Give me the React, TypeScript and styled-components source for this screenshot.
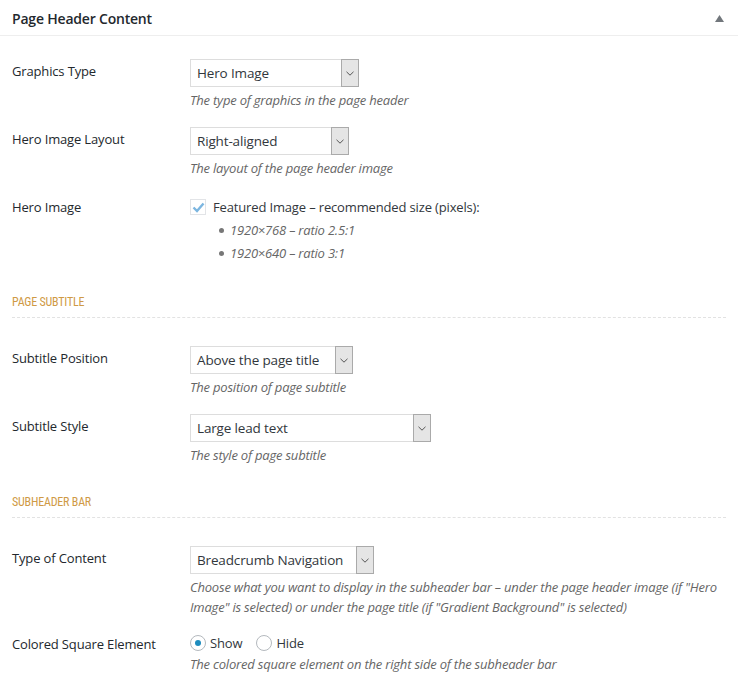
import React from "react";
import styled, { createGlobalStyle } from "styled-components";

const Global = createGlobalStyle`
  html, body { margin: 0; padding: 0; background: #fff; }
  body { font-family: "Open Sans", "Noto Sans", sans-serif; color: #23282d; font-size: 13px; }
`;

const Box = styled.div`
  width: 738px;
  background: #fff;
`;

const Header = styled.div`
  height: 36px;
  border-bottom: 1px solid #eeeeee;
  display: flex;
  align-items: center;
  justify-content: space-between;
  padding: 0 12px 0 12px;
  box-sizing: border-box;
`;

const Title = styled.h2`
  margin: 0;
  font-size: 14px;
  font-weight: 600;
  color: #23282d;
  letter-spacing: -0.2px;
  line-height: 20px;
  padding-top: 2px;
`;

const Toggle = styled.span`
  display: flex;
  width: 14px;
  justify-content: center;
  padding-top: 2px;
`;

const Body = styled.div`
  padding: 23px 12px 24px 12px;
  display: flex;
  flex-direction: column;
`;

const Row = styled.div<{ $gap?: number }>`
  display: grid;
  grid-template-columns: 178px 1fr;
  margin-top: ${(p) => p.$gap ?? 17}px;
  &:first-child { margin-top: 0; }
`;

const Label = styled.div`
  padding-top: 2px;
  line-height: 20px;
  font-size: 13px;
  color: #23282d;
  letter-spacing: -0.15px;
`;

const Field = styled.div`
  display: flex;
  flex-direction: column;
  align-items: flex-start;
`;

const Select = styled.div<{ $w: number }>`
  width: ${(p) => p.$w}px;
  height: 28px;
  box-sizing: border-box;
  border: 1px solid #dddddd;
  display: flex;
  align-items: stretch;
  background: #fff;
`;

const SelectText = styled.span`
  flex: 1;
  padding-left: 6px;
  line-height: 26px;
  font-size: 13.5px;
  color: #32373c;
  letter-spacing: -0.15px;
  white-space: nowrap;
`;

const SelectArrow = styled.span`
  width: 16px;
  border: 1px solid #aaaaaa;
  margin: -1px -1px -1px 0;
  background: #e5e5e5;
  display: flex;
  align-items: center;
  justify-content: center;
`;

const Desc = styled.p<{ $tight?: boolean }>`
  margin: ${(p) => (p.$tight ? 0 : 3)}px 0 0 0;
  font-style: italic;
  font-size: 13px;
  line-height: 20px;
  color: #666666;
  letter-spacing: -0.2px;
  max-width: 536px;
`;

const CheckLine = styled.label`
  display: flex;
  align-items: center;
  height: 24px;
  gap: 7px;
  color: #32373c;
  letter-spacing: -0.15px;
`;

const CheckBox = styled.span`
  width: 16px;
  height: 16px;
  box-sizing: border-box;
  border: 1px solid #e2e4e7;
  display: flex;
  align-items: center;
  justify-content: center;
  background: #fff;
`;

const Bullets = styled.ul`
  margin: 0;
  padding: 0 0 0 29px;
  list-style: none;
`;

const Bullet = styled.li`
  line-height: 23px;
  font-style: italic;
  color: #666666;
  display: flex;
  align-items: center;
  gap: 6px;
  letter-spacing: -0.2px;
  &::before {
    content: "";
    width: 5px;
    height: 5px;
    border-radius: 50%;
    background: #777;
  }
`;

const SectionHead = styled.div<{ $top: number }>`
  margin-top: ${(p) => p.$top}px;
  margin-bottom: 28px;
  border-bottom: 1px dashed #e2e2e2;
  padding-bottom: 6px;
  line-height: 18px;
  font-family: "Liberation Sans Narrow", "Roboto Condensed", "Liberation Sans", sans-serif;
  font-size: 12px;
  color: #cf9a45;
  text-transform: uppercase;
  letter-spacing: -0.2px;
`;

const RadioGroup = styled.div`
  display: flex;
  align-items: center;
  height: 22px;
  gap: 14px;
`;

const RadioLabel = styled.label`
  display: flex;
  align-items: center;
  gap: 4px;
  color: #32373c;
  letter-spacing: -0.15px;
`;

const RadioCircle = styled.span<{ $on?: boolean }>`
  width: 16px;
  height: 16px;
  box-sizing: border-box;
  border-radius: 50%;
  border: 1px solid #b4b9be;
  background: #fff;
  display: flex;
  align-items: center;
  justify-content: center;
  &::after {
    content: "";
    width: 6px;
    height: 6px;
    border-radius: 50%;
    background: ${(p) => (p.$on ? "#1e8cbe" : "transparent")};
  }
`;

const Chevron = () => (
  <svg width="8" height="5" viewBox="0 0 8 5">
    <path d="M0.5 0.8 L4 4.2 L7.5 0.8" fill="none" stroke="#555" strokeWidth="1" />
  </svg>
);

const Dropdown = ({ w, value }: { w: number; value: string }) => (
  <Select $w={w}>
    <SelectText>{value}</SelectText>
    <SelectArrow>
      <Chevron />
    </SelectArrow>
  </Select>
);

export default function App() {
  return (
    <>
      <Global />
      <Box>
        <Header>
          <Title>Page Header Content</Title>
          <Toggle>
            <svg width="9" height="7" viewBox="0 0 9 7">
              <path d="M4.5 0 L9 7 L0 7 Z" fill="#72777c" />
            </svg>
          </Toggle>
        </Header>
        <Body>
          <Row>
            <Label>Graphics Type</Label>
            <Field>
              <Dropdown w={169} value="Hero Image" />
              <Desc>The type of graphics in the page header</Desc>
            </Field>
          </Row>
          <Row>
            <Label>Hero Image Layout</Label>
            <Field>
              <Dropdown w={159} value="Right-aligned" />
              <Desc>The layout of the page header image</Desc>
            </Field>
          </Row>
          <Row>
            <Label>Hero Image</Label>
            <Field>
              <CheckLine>
                <CheckBox>
                  <svg width="13" height="11" viewBox="0 0 13 11">
                    <path d="M1.5 5.5 L5 9 L11.5 1.5" fill="none" stroke="#7cb6e0" strokeWidth="2.4" />
                  </svg>
                </CheckBox>
                Featured Image – recommended size (pixels):
              </CheckLine>
              <Bullets>
                <Bullet>1920×768 – ratio 2.5:1</Bullet>
                <Bullet>1920×640 – ratio 3:1</Bullet>
              </Bullets>
            </Field>
          </Row>

          <SectionHead $top={28}>Page Subtitle</SectionHead>

          <Row $gap={0}>
            <Label>Subtitle Position</Label>
            <Field>
              <Dropdown w={163} value="Above the page title" />
              <Desc>The position of page subtitle</Desc>
            </Field>
          </Row>
          <Row>
            <Label>Subtitle Style</Label>
            <Field>
              <Dropdown w={241} value="Large lead text" />
              <Desc>The style of page subtitle</Desc>
            </Field>
          </Row>

          <SectionHead $top={28}>Subheader Bar</SectionHead>

          <Row $gap={0}>
            <Label>Type of Content</Label>
            <Field>
              <Dropdown w={184} value="Breadcrumb Navigation" />
              <Desc>
                Choose what you want to display in the subheader bar – under the page header image (if "Hero
                Image" is selected) or under the page title (if "Gradient Background" is selected)
              </Desc>
            </Field>
          </Row>
          <Row $gap={15}>
            <Label>Colored Square Element</Label>
            <Field>
              <RadioGroup>
                <RadioLabel>
                  <RadioCircle $on />
                  Show
                </RadioLabel>
                <RadioLabel>
                  <RadioCircle />
                  Hide
                </RadioLabel>
              </RadioGroup>
              <Desc $tight>The colored square element on the right side of the subheader bar</Desc>
            </Field>
          </Row>
        </Body>
      </Box>
    </>
  );
}
